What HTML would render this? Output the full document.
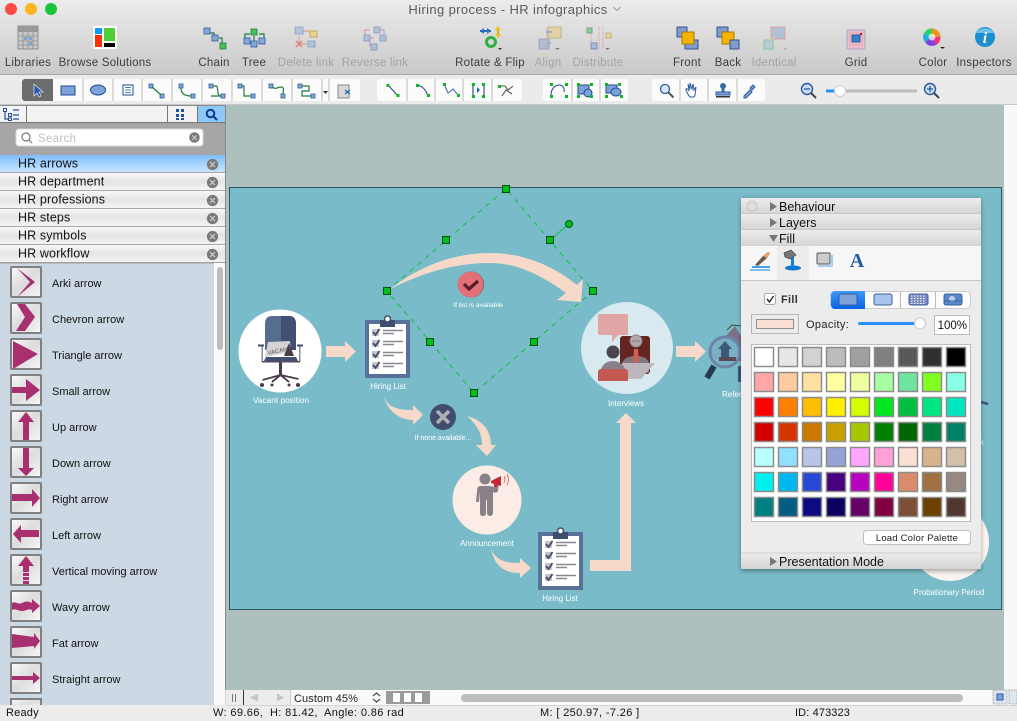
<!DOCTYPE html>
<html><head><meta charset="utf-8"><title>Hiring process - HR infographics</title>
<style>
html,body{margin:0;padding:0;background:#adc0bd}
svg{display:block;position:absolute;left:0;top:0}
text{font-family:"Liberation Sans",sans-serif;white-space:pre}
.tb{font-size:11.5px;letter-spacing:.25px;fill:#3c3c3c;text-anchor:middle}
.dis{fill:#a2a2a2}
.lib{font-size:12.5px;fill:#111;letter-spacing:.12px}
.it{font-size:11px;fill:#111}
.st{font-size:11px;fill:#111;letter-spacing:.12px}
.cv{font-size:8px;fill:#fff;text-anchor:middle}
.ph{font-size:12.5px;fill:#111}
.m{fill:#a83070}
.d{stroke:#bbb;stroke-width:1}
.sw{stroke:#8c8c8c;stroke-width:1.5}
.ln{fill:none;stroke:#1b7d3a;stroke-width:1.2}
.bx{fill:#86a8d8;stroke:#2c5a9c;stroke-width:.8}
.gbx{fill:#48c060;stroke:#1b7d3a;stroke-width:.8}
.h{fill:#00bf1c;stroke:#05500f;stroke-width:1}
</style></head><body>
<svg width="1017" height="721" viewBox="0 0 1017 721" xmlns="http://www.w3.org/2000/svg">
<defs>
<filter id="blur" x="-10%" y="-10%" width="120%" height="120%"><feGaussianBlur stdDeviation="2.500"/></filter>
<linearGradient id="tg" x1="0" y1="0" x2="0" y2="1"><stop offset="0" stop-color="#ececec"/><stop offset="1" stop-color="#c9c9c9"/></linearGradient>
<linearGradient id="hd" x1="0" y1="0" x2="0" y2="1"><stop offset="0" stop-color="#f8f8f8"/><stop offset=".5" stop-color="#e4e4e4"/><stop offset="1" stop-color="#f4f4f4"/></linearGradient>
<linearGradient id="bl" x1="0" y1="0" x2="0" y2="1"><stop offset="0" stop-color="#80bdfb"/><stop offset="1" stop-color="#c6e6fe"/></linearGradient>
<linearGradient id="ph" x1="0" y1="0" x2="0" y2="1"><stop offset="0" stop-color="#ececec"/><stop offset="1" stop-color="#d4d4d4"/></linearGradient>
<linearGradient id="btn" x1="0" y1="0" x2="1" y2="1"><stop offset="0" stop-color="#fafafa"/><stop offset=".5" stop-color="#dcdcdc"/><stop offset="1" stop-color="#f8f8f8"/></linearGradient>
<linearGradient id="seg" x1="0" y1="0" x2="0" y2="1"><stop offset="0" stop-color="#3c98fc"/><stop offset="1" stop-color="#0a62ea"/></linearGradient>
<g id="clip">
<rect x="0" y="0" width="45" height="58" fill="#587199"/>
<rect x="4" y="4" width="37" height="50" fill="#fff"/>
<rect x="15" y="0" width="15" height="7" fill="#3f4d6e"/>
<circle cx="22.500" cy="-1" r="3" fill="#fff" stroke="#3f4d6e" stroke-width="1.500"/>
<g id="cr"><rect x="7" y="9" width="7" height="7" fill="#c8c4cc"/><path d="M8 12l2.500 3 4-6" fill="none" stroke="#3f4d6e" stroke-width="1.800"/><path d="M18 10.500h20M18 13.500h11" stroke="#8b8790" stroke-width="1.500"/></g>
<use href="#cr" y="11"/><use href="#cr" y="22"/><use href="#cr" y="33"/>
</g>
<g id="x"><circle r="7" fill="#7a7a7a"/><path d="M-3-3L3 3M3-3L-3 3" stroke="#ccc" stroke-width="1.500"/></g>
<rect id="ib" width="30" height="30" x="1" y="1" rx="1" fill="url(#btn)" stroke="#808080" stroke-width="2"/>
</defs>

<!-- Backgrounds -->
<rect width="1017" height="721" fill="#adc0bd"/>
<rect width="1017" height="74" fill="url(#tg)"/>
<rect y="74" width="1017" height="1" fill="#a9a9a9"/>
<rect y="75" width="1017" height="30" fill="#ebebeb"/>
<rect y="104" width="1017" height="1" fill="#c8c8c8"/>

<!-- Window controls -->
<circle cx="11" cy="9" r="6" fill="#fc4a48"/><circle cx="31" cy="9" r="6" fill="#fdb61e"/><circle cx="51" cy="9" r="6" fill="#19c53a"/>
<text x="508" y="14" font-size="13" text-anchor="middle" fill="#5a5a5a" letter-spacing=".38">Hiring process - HR infographics</text>
<path d="M613 7l4 3.500 4-3.500" fill="none" stroke="#aaa" stroke-width="1.200"/>

<!-- Toolbar icons -->
<g><rect x="18" y="26" width="20" height="23" fill="#c8c8c8" stroke="#8d8d8d"/><rect x="18" y="26" width="20" height="6" fill="#999"/><path d="M18 36h20M18 41h20M18 45h20M23 32v17M28 32v17M33 32v17" stroke="#8d8d8d" stroke-width=".8"/><rect x="24" y="37" width="3" height="3" fill="#7ba3d8"/><rect x="29" y="37" width="3" height="3" fill="#7ba3d8"/><rect x="29" y="42" width="3" height="3" fill="#7ba3d8"/></g>
<g><rect x="93" y="26" width="24" height="23" rx="2" fill="#fff"/><rect x="95" y="28" width="7" height="6" fill="#0a9cf0"/><rect x="95" y="35" width="7" height="12" fill="#fa3205"/><rect x="104" y="28" width="11" height="13" fill="#50d038"/><rect x="104" y="43" width="11" height="4" fill="#000"/></g>
<!-- chain -->
<g><path class="ln" d="M209 33h5v5M219 38h3v5"/><rect class="bx" x="204" y="28" width="6" height="6"/><rect class="bx" x="212" y="35" width="6" height="6"/><rect class="gbx" x="220" y="43" width="6" height="6"/></g>
<!-- tree -->
<g><path class="ln" d="M254 36v8M250 34h-5v5M259 34h5v5"/><rect class="gbx" x="251" y="29" width="6" height="6"/><rect class="bx" x="244" y="38" width="6" height="6"/><rect class="bx" x="251" y="41" width="6" height="6"/><rect class="bx" x="259" y="38" width="6" height="6"/></g>
<!-- delete -->
<g opacity=".65"><path d="M299 36v8h8M303 31h10" stroke="#e07060" fill="none"/><rect class="bx" x="295" y="27" width="8" height="7" opacity=".7"/><rect x="310" y="31" width="7" height="6" fill="#f0d060" stroke="#b89020"/><rect class="bx" x="308" y="41" width="7" height="6" opacity=".7"/><path d="M296 41l6 6M302 41l-6 6" stroke="#e05040" stroke-width="1.500"/></g>
<!-- reverse -->
<g opacity=".5"><path d="M370 30h-5v6M379 30h5v4M374 38h-4v8" fill="none" stroke="#c04090"/><rect class="bx" x="374" y="27" width="6" height="6"/><rect class="bx" x="364" y="35" width="6" height="6"/><rect class="bx" x="380" y="35" width="6" height="6"/><rect class="bx" x="371" y="44" width="6" height="6"/></g>
<!-- rotate -->
<g><path d="M480 31h11" stroke="#2a70c0" stroke-width="2"/><path d="M484 28l-4 3 4 3zM487 28l4 3-4 3z" fill="#2a70c0"/><path d="M498 28v8" stroke="#e0a800" stroke-width="2"/><path d="M495 30l3-4 3 4zM495 34l3 4 3-4z" fill="#f0c020"/><circle cx="491" cy="42" r="4.500" fill="none" stroke="#30b040" stroke-width="3"/><path d="M498 48l4 0-2 2z" fill="#333"/></g>
<!-- align -->
<g opacity=".55"><rect x="548" y="27" width="13" height="11" fill="#eac878" stroke="#b09040"/><rect x="539" y="39" width="10" height="10" fill="#90a8d0" stroke="#6080b0"/><path d="M547 28v20" stroke="#e07070" stroke-dasharray="1.500 1"/><path d="M552 32h-6M551 43h-4" stroke="#6090d0" stroke-width="2"/><path d="M555 48h5l-2.500 2z" fill="#333"/></g>
<!-- distribute -->
<g opacity=".55"><path d="M591 27v22M599 27v22M603 27v22" stroke="#e07070" stroke-dasharray="1.500 1"/><rect x="587" y="28" width="5" height="5" fill="#48c060" stroke="#1b7d3a"/><rect x="606" y="33" width="5" height="5" fill="#f0d060" stroke="#b89020"/><rect x="591" y="43" width="6" height="6" fill="#86a8d8" stroke="#2c5a9c"/><path d="M605 48h5l-2.500 2z" fill="#333"/></g>
<!-- front -->
<g><rect x="677" y="27" width="10" height="10" fill="#7f9ccc" stroke="#35558c"/><rect x="685" y="40" width="13" height="9" fill="#7f9ccc" stroke="#35558c"/><rect x="682" y="32" width="12" height="12" fill="#f4b400" stroke="#a87800"/></g>
<!-- back -->
<g><rect x="717" y="27" width="11" height="10" fill="#7f9ccc" stroke="#35558c"/><rect x="722" y="32" width="12" height="12" fill="#f4b400" stroke="#a87800"/><rect x="730" y="40" width="9" height="9" fill="#7f9ccc" stroke="#35558c"/></g>
<!-- identical -->
<g opacity=".55"><rect x="771" y="27" width="14" height="12" fill="#90a8d0" stroke="#d08060"/><rect x="764" y="40" width="9" height="9" fill="#a8c0d8" stroke="#48c060"/><path d="M770 40l5-3M783 48h5l-2.500 2z" stroke="#f0c0a0"/></g>
<!-- grid -->
<g><rect x="847" y="30" width="18" height="19" fill="#eec4d0" stroke="#a6a6c6"/><path d="M850 30v19M853 30v19M856 30v19M859 30v19M862 30v19M847 33h18M847 36h18M847 39h18M847 42h18M847 45h18" stroke="#dd9aac" stroke-width=".6"/><rect x="852" y="35" width="8" height="7" fill="#3a80c8" stroke="#2c5a9c"/><rect x="860" y="33" width="2" height="2" fill="#d00020"/></g>
<!-- color -->
<g><circle cx="932" cy="37" r="8.500" fill="#f0e040"/><path d="M932 37V28.500A8.500 8.500 0 0 1 940.500 37z" fill="#f09020"/><path d="M932 37L940.500 37A8.500 8.500 0 0 1 936 45z" fill="#f03080"/><path d="M932 37l4 8A8.500 8.500 0 0 1 925 42z" fill="#8040e0"/><path d="M932 37l-7 5A8.500 8.500 0 0 1 924 33z" fill="#20b0e0"/><path d="M932 37l-8-4A8.500 8.500 0 0 1 932 28.500z" fill="#30d060"/><circle cx="932" cy="37" r="3.500" fill="#fff" opacity=".7"/><path d="M940 47h5l-2.500 2z" fill="#222"/></g>
<!-- inspectors -->
<g><circle cx="985" cy="37" r="10" fill="#1d8fd0"/><path d="M976 33a9.500 7 0 0 1 18 0z" fill="#70c0ec"/><text x="985" y="43" font-size="16" font-weight="bold" font-style="italic" fill="#fff" text-anchor="middle" style="font-family:'Liberation Serif',serif">i</text></g>

<text class="tb" x="28" y="66">Libraries</text>
<text class="tb" x="105" y="66">Browse Solutions</text>
<text class="tb" x="214" y="66">Chain</text>
<text class="tb" x="254" y="66">Tree</text>
<text class="tb dis" x="306" y="66">Delete link</text>
<text class="tb dis" x="375" y="66">Reverse link</text>
<text class="tb" x="490" y="66">Rotate &amp; Flip</text>
<text class="tb dis" x="548" y="66">Align</text>
<text class="tb dis" x="598" y="66">Distribute</text>
<text class="tb" x="687" y="66">Front</text>
<text class="tb" x="728" y="66">Back</text>
<text class="tb dis" x="774" y="66">Identical</text>
<text class="tb" x="856" y="66">Grid</text>
<text class="tb" x="933" y="66">Color</text>
<text class="tb" x="984" y="66">Inspectors</text>

<!-- Second toolbar -->
<rect x="22" y="79" width="338" height="22" rx="3" fill="#fbfbfb"/>
<path d="M22 82a3 3 0 0 1 3-3h28v22H25a3 3 0 0 1-3-3z" fill="#6c6c6c"/>
<path class="d" d="M83 79v22M113 79v22M142 79v22M172 79v22M202 79v22M232 79v22M262 79v22M292 79v22M322 79v22M329 79v22"/>
<rect x="377" y="79" width="145" height="22" rx="3" fill="#fbfbfb"/>
<path class="d" d="M407 79v22M435 79v22M463 79v22M492 79v22"/>
<rect x="543" y="79" width="85" height="22" rx="3" fill="#fbfbfb"/>
<path class="d" d="M572 79v22M600 79v22"/>
<rect x="652" y="79" width="113" height="22" rx="3" fill="#fbfbfb"/>
<path class="d" d="M680 79v22M708 79v22M737 79v22"/>

<path d="M34 84v12l3-3 2 4 2-1-2-4h4z" fill="#2a55b0" stroke="#fff" stroke-width=".6"/>
<rect x="61" y="86" width="14" height="9" fill="#7ba3d8" stroke="#204a90"/>
<ellipse cx="98" cy="90" rx="7.500" ry="5" fill="#7ba3d8" stroke="#204a90"/>
<rect x="123" y="85" width="10" height="10" fill="#fff" stroke="#204a90"/><path d="M125 87.500h6M125 90h6M125 92.500h6" stroke="#204a90" stroke-width=".8"/>
<g><rect class="bx" x="149" y="84" width="4" height="4"/><rect class="bx" x="160" y="94" width="4" height="4"/><path class="ln" d="M152 87l9 8"/></g>
<g><rect class="bx" x="179" y="84" width="4" height="4"/><rect class="bx" x="191" y="94" width="4" height="4"/><path class="ln" d="M181 88c0 6 4 8 10 8"/></g>
<g><rect class="bx" x="209" y="84" width="4" height="4"/><rect class="bx" x="221" y="94" width="4" height="4"/><path class="ln" d="M213 86h3c3 0 0 10 5 10M211 96h10"/></g>
<g><rect class="bx" x="238" y="84" width="4" height="4"/><rect class="bx" x="251" y="94" width="4" height="4"/><path class="ln" d="M242 86h2v10h7"/></g>
<g><rect class="bx" x="269" y="84" width="4" height="4"/><rect class="bx" x="281" y="94" width="4" height="4"/><path class="ln" d="M272 87c4 3 5 0 9 0s2 5 2 7"/></g>
<g><rect class="bx" x="298" y="84" width="4" height="4"/><rect class="bx" x="311" y="94" width="4" height="4"/><path class="ln" d="M302 86h7v5h-7v5h9"/></g>
<path d="M323 91h5l-2.500 3z" fill="#333"/>
<g><rect x="338" y="85" width="11" height="13" fill="#d8d8d8" stroke="#888"/><path d="M345 90l5 4M350 90l-5 4" stroke="#2060c0" stroke-width="1.200"/></g>
<g stroke="#1b7d3a" fill="none" stroke-width="1.100"><path d="M388 85l10 11" stroke="#204a90"/><path d="M417 85c6 1 9 5 11 11" stroke="#204a90"/><path d="M444 84l4 9 5-4 5 6" stroke="#4a70a0"/><path d="M473 84v12M484 84v12" stroke="#204a90"/><path d="M499 86h6l3 4 5-4M502 96l4-6 6 4" stroke="#555"/></g>
<g fill="#0cb81e"><rect x="386.500" y="84" width="3" height="3"/><rect x="396.500" y="94" width="3" height="3"/><rect x="416" y="84" width="3" height="3"/><rect x="427" y="94" width="3" height="3"/><rect x="443" y="83" width="3" height="3"/><rect x="457" y="94" width="3" height="3"/><rect x="472" y="83" width="3" height="3"/><rect x="472" y="95" width="3" height="3"/><rect x="482" y="83" width="3" height="3"/><rect x="482" y="95" width="3" height="3"/><rect x="498" y="85" width="3" height="3"/></g>
<path d="M477 87v6l3-3z" fill="#2060c0"/>
<g fill="none" stroke="#204a90"><path d="M551 95c0-6 4-10 8-10s6 4 5 7"/><rect x="578" y="85" width="11" height="9" fill="#7ba3d8"/><circle cx="588" cy="93" r="4" fill="#7ba3d8"/><rect x="606" y="85" width="11" height="8" fill="#7ba3d8"/><ellipse cx="616" cy="92" rx="5" ry="4" fill="#7ba3d8"/></g>
<g fill="#0cb81e"><rect x="550" y="83" width="3" height="3"/><rect x="565" y="83" width="3" height="3"/><rect x="550" y="95" width="3" height="3"/><rect x="565" y="95" width="3" height="3"/><rect x="577" y="83" width="3" height="3"/><rect x="590" y="83" width="3" height="3"/><rect x="577" y="95" width="3" height="3"/><rect x="590" y="95" width="3" height="3"/><rect x="605" y="83" width="3" height="3"/><rect x="618" y="83" width="3" height="3"/><rect x="605" y="95" width="3" height="3"/><rect x="620" y="95" width="3" height="3"/></g>
<g fill="none" stroke="#2c5a9c" stroke-width="1.300"><circle cx="665" cy="89" r="4.500" fill="#d8e8f8"/><path d="M668.500 92.500l5 5" stroke="#555" stroke-width="2"/><path d="M690 97c-3-3-4-7-4-8s2 0 3 2l-1-7 2 5 0-6 2 6 1-5 1 6 2-3-1 8c0 1-1 2-2 2z" stroke-width="1"/></g>
<g fill="#3a6aa8"><circle cx="723" cy="86" r="3"/><rect x="721.500" y="88" width="3" height="4"/><rect x="716" y="92" width="14" height="3" fill="#7ba3d8" stroke="#2c5a9c"/><rect x="716" y="96" width="14" height="1.500" fill="#333"/></g>
<path d="M744 96l6-6 2 2-6 6h-2zM750 88l3-3 2 2-3 3z" fill="#7ba3d8" stroke="#2c5a9c"/>
<g fill="#c8dcf4" stroke="#2c5a9c" stroke-width="1.400"><circle cx="807" cy="89" r="5.500"/><circle cx="930" cy="89" r="5.500"/></g>
<path d="M804 89h6M927 89h6M930 86v6" stroke="#2c5a9c" stroke-width="1.300"/>
<path d="M811 93l5 5M934 93l5 5" stroke="#444" stroke-width="2"/>
<rect x="826" y="89.500" width="91" height="3" rx="1.500" fill="#bbb"/><rect x="826" y="89.500" width="12" height="3" fill="#2a8ff8"/>
<circle cx="840" cy="91" r="5.500" fill="#fff" stroke="#ccc"/>

<!-- Sidebar -->
<rect x="0" y="105" width="226" height="600" fill="#ccd9e4"/>
<rect x="0" y="105" width="226" height="1" fill="#8a8a8a"/>
<rect x="0" y="106" width="226" height="16" fill="#f3f3f3"/>
<rect x="198" y="106" width="27" height="16" fill="#8cc8fa"/>
<path d="M26.500 106v16M167.500 106v16M197.500 106v16" stroke="#777"/>
<g fill="none" stroke="#2050a0"><rect x="3.500" y="108.500" width="3" height="3"/><rect x="8.500" y="113.500" width="3" height="3"/><rect x="8.500" y="118" width="3" height="2.500"/><path d="M5 112v7h3M13 110h6M13 115h6M13 119h6" stroke-width="1.200"/></g>
<g fill="#2050a0"><rect x="176" y="109" width="3" height="3"/><rect x="181" y="109" width="3" height="3"/><rect x="176" y="114" width="3" height="3"/><rect x="181" y="114" width="3" height="3"/><rect x="176" y="118" width="3" height="2"/><rect x="181" y="118" width="3" height="2"/></g>
<circle cx="210.500" cy="113.500" r="3.800" fill="none" stroke="#123a90" stroke-width="2"/><path d="M213.500 116.500l3.500 3.500" stroke="#123a90" stroke-width="2.200"/>
<rect x="0" y="122" width="226" height="33" fill="#a6a6a6"/>
<rect x="0" y="122" width="226" height="1" fill="#777"/>
<rect x="16" y="129" width="187" height="17" rx="3" fill="#fff" stroke="#d8d8d8"/>
<circle cx="26" cy="137" r="4" fill="none" stroke="#777" stroke-width="1.200"/><path d="M29 140l3 3" stroke="#777" stroke-width="1.200"/>
<text x="38" y="142" font-size="11.500" fill="#c0c0c0" letter-spacing=".3">Search</text>
<use href="#x" transform="translate(194.500 137.500) scale(.75)"/>

<rect y="155" width="226" height="17" fill="url(#bl)"/><rect y="172" width="226" height="1" fill="#a8a8a8"/>
<rect y="173" width="226" height="17" fill="url(#hd)"/><rect y="190" width="226" height="1" fill="#a8a8a8"/>
<rect y="191" width="226" height="17" fill="url(#hd)"/><rect y="208" width="226" height="1" fill="#a8a8a8"/>
<rect y="209" width="226" height="17" fill="url(#hd)"/><rect y="226" width="226" height="1" fill="#a8a8a8"/>
<rect y="227" width="226" height="17" fill="url(#hd)"/><rect y="244" width="226" height="1" fill="#a8a8a8"/>
<rect y="245" width="226" height="17" fill="url(#hd)"/><rect y="262" width="226" height="1.500" fill="#a0a0a0"/>
<text class="lib" x="18" y="167.500">HR arrows</text>
<text class="lib" x="18" y="185.500">HR department</text>
<text class="lib" x="18" y="203.500">HR professions</text>
<text class="lib" x="18" y="221.500">HR steps</text>
<text class="lib" x="18" y="239.500">HR symbols</text>
<text class="lib" x="18" y="257.500">HR workflow</text>
<use href="#x" transform="translate(212.500 164.500) scale(.8)"/>
<use href="#x" transform="translate(212.500 182.500) scale(.8)"/>
<use href="#x" transform="translate(212.500 200.500) scale(.8)"/>
<use href="#x" transform="translate(212.500 218.500) scale(.8)"/>
<use href="#x" transform="translate(212.500 236.500) scale(.8)"/>
<use href="#x" transform="translate(212.500 254.500) scale(.8)"/>

<rect x="214" y="263" width="11" height="442" fill="#fafafa"/>
<rect x="217" y="267" width="6" height="83" rx="3" fill="#bdbdbd"/>
<rect x="225" y="105" width="1" height="585" fill="#888"/>

<g transform="translate(10 266)"><use href="#ib"/><path class="m" d="M7 2L25 16 7 31 20 16z"/></g>
<g transform="translate(10 302)"><use href="#ib"/><path class="m" d="M7 2h8l10 13-10 14H6l9-14z"/></g>
<g transform="translate(10 338)"><use href="#ib"/><path class="m" d="M3 3L28 16 3 31z"/></g>
<g transform="translate(10 374)"><use href="#ib"/><path class="m" d="M2 13h14V5l14 11-14 11v-8H2z"/></g>
<g transform="translate(10 410)"><use href="#ib"/><path class="m" d="M16 2l8 10h-5v18h-6V12H8z"/></g>
<g transform="translate(10 446)"><use href="#ib"/><path class="m" d="M13 2h6v20h5l-8 8-8-8h5z"/></g>
<g transform="translate(10 482)"><use href="#ib"/><path class="m" d="M2 12h20V7l8 9-8 9v-6H2z"/></g>
<g transform="translate(10 518)"><use href="#ib"/><path class="m" d="M29 12H11V7l-8 9 8 9v-6h18z"/></g>
<g transform="translate(10 554)"><use href="#ib"/><path class="m" d="M16 2l8 10h-5v6h-6v-6H8zM13 19h6v3h-6zM13 23h6v3h-6zM13 27h6v3h-6z"/></g>
<g transform="translate(10 590)"><use href="#ib"/><path class="m" d="M2 13c4-2 6 2 10 0s6-2 10 0V9l8 7-8 7v-3c-4-2-6 1-10 1s-6-3-10-1z"/></g>
<g transform="translate(10 626)"><use href="#ib"/><path class="m" d="M2 8l22 3V7l6 8-6 8v-3L2 22z"/></g>
<g transform="translate(10 662)"><use href="#ib"/><path class="m" d="M2 14h21v-4l7 6-7 6v-4H2z"/></g>
<g transform="translate(10 698)"><rect x="1" y="1" width="30" height="10" fill="url(#btn)" stroke="#808080" stroke-width="2"/></g>

<text class="it" x="52" y="287">Arki arrow</text>
<text class="it" x="52" y="323">Chevron arrow</text>
<text class="it" x="52" y="359">Triangle arrow</text>
<text class="it" x="52" y="395">Small arrow</text>
<text class="it" x="52" y="431">Up arrow</text>
<text class="it" x="52" y="467">Down arrow</text>
<text class="it" x="52" y="503">Right arrow</text>
<text class="it" x="52" y="539">Left arrow</text>
<text class="it" x="52" y="575">Vertical moving arrow</text>
<text class="it" x="52" y="611">Wavy arrow</text>
<text class="it" x="52" y="647">Fat arrow</text>
<text class="it" x="52" y="683">Straight arrow</text>

<!-- Canvas page -->
<rect x="229.500" y="187.500" width="772" height="422" fill="#7abbca" stroke="#2e5763"/>

<!-- Vacant -->
<circle cx="280" cy="351" r="41.500" fill="#fff"/>
<path d="M265 350v-26q0-8 7-8h17q7 0 7 8v26z" fill="#566d91"/>
<path d="M281 316h8q7 0 7 8v26h-15z" fill="#3f5072"/>
<path d="M266 357h30l2 4h-34z" fill="#3f5072"/>
<rect x="261.500" y="346" width="1.500" height="16" fill="#8a8a98"/><rect x="299" y="346" width="1.500" height="16" fill="#8a8a98"/>
<rect x="258" y="344.500" width="6" height="2" fill="#3f5072"/><rect x="297" y="344.500" width="6" height="2" fill="#3f5072"/>
<rect x="262" y="361" width="38" height="1.500" fill="#5a4a58"/>
<rect x="279" y="362" width="3" height="13" fill="#4a3c4a"/>
<path d="M280.500 375l-18 5M280.500 375l-8.500 7M280.500 375l8.500 7M280.500 375l18 4" stroke="#4a3c4a" stroke-width="1.800"/>
<circle cx="262" cy="385" r="2" fill="#4a3c4a"/><circle cx="272" cy="385" r="1.500" fill="#4a3c4a"/><circle cx="289" cy="385" r="1.500" fill="#4a3c4a"/><circle cx="298" cy="385" r="2" fill="#4a3c4a"/>
<path d="M268 342l22-1 1 11-26 5z" fill="#d6d2d2"/>
<path d="M289 343l5 13h-10z" fill="#4a3c4a"/>
<text x="0" y="0" transform="translate(268 355) rotate(-12)" font-size="6" fill="#555">VACANT</text>
<text class="cv" x="281" y="403" style="font-size:8.300px">Vacant position</text>

<path d="M326 346h19v-5l11 10.500-11 10.500v-5h-19z" fill="#f6d9c9"/>
<use href="#clip" x="365" y="320"/>
<text class="cv" x="388" y="389">Hiring List</text>

<!-- Big curved arrow + selection -->
<path d="M390 289C425 262 460 253 490 253C525 253 555 267 577 285L583 279L581 302L557 300L566 293C545 278 520 263 490 263C455 263 425 272 390 289z" fill="#f6d9c9"/>
<circle cx="471" cy="284.500" r="13" fill="#4a4a5a"/>
<circle cx="470.500" cy="284.500" r="13" fill="#e27078"/>
<path d="M464 284l5 5 9-8" fill="none" stroke="#5a1c2a" stroke-width="3.200"/>
<text class="cv" x="478" y="307" style="font-size:6.800px">If list is available</text>
<path d="M387 291L506 189L593 291L474 393z" fill="none" stroke="#10c040" stroke-width="1" stroke-dasharray="5 5"/>
<path d="M550 240L569 224" stroke="#10c040" stroke-width="1"/>
<circle class="h" cx="569" cy="224" r="3.500"/>
<rect class="h" x="502.500" y="185.500" width="7" height="7"/>
<rect class="h" x="383.500" y="287.500" width="7" height="7"/>
<rect class="h" x="589.500" y="287.500" width="7" height="7"/>
<rect class="h" x="470.500" y="389.500" width="7" height="7"/>
<rect class="h" x="442.500" y="236.500" width="7" height="7"/>
<rect class="h" x="546.500" y="236.500" width="7" height="7"/>
<rect class="h" x="426.500" y="338.500" width="7" height="7"/>
<rect class="h" x="530.500" y="338.500" width="7" height="7"/>

<!-- If none -->
<path d="M383 395C388 408 398 410 413 410V405L423 415 413 425V420C400 420 388 412 383 395z" fill="#f6d9c9"/>
<circle cx="443" cy="417" r="13" fill="#3f4d6e"/>
<path d="M437 411l12 12M449 411l-12 12" stroke="#b4aeb6" stroke-width="3.500"/>
<text class="cv" x="443" y="440" style="font-size:7px">If none available...</text>
<path d="M467 416C482 420 491 430 491 445H496L487 456 476 445H482C482 432 476 424 467 416z" fill="#f6d9c9"/>

<!-- Announcement -->
<circle cx="487" cy="500" r="34.500" fill="#fbece5"/>
<circle cx="485" cy="479" r="5.500" fill="#8a8088"/>
<path d="M480 486h8c4 0 5 1 7 1l1-5 3 1-1 8c-1 2-3 2-5 1v21c0 2-2 3-3 3s-3-1-3-3v-13h-1v13c0 2-1 3-3 3s-3-1-3-3v-22l-1 11h-3l1-10c0-4 1-6 3-6z" fill="#8a8088"/>
<path d="M491 481l10-5v10l-10-3z" fill="#c42838"/><rect x="494" y="484" width="3" height="3" fill="#c42838"/>
<path d="M504 476q2 3 0 7M507 474q3 5 0 11" fill="none" stroke="#e05060" stroke-width=".8"/>
<text class="cv" x="487" y="546">Announcement</text>
<path d="M491 549C497 562 508 563 520 563V558L531 568 520 578V573C505 573 495 567 491 549z" fill="#f6d9c9"/>
<use href="#clip" x="538" y="532"/>
<text class="cv" x="560" y="601">Hiring List</text>
<path d="M590 560H620V423H616L626 413 636 423H631V571H590z" fill="#f6d9c9"/>

<!-- Interviews -->
<circle cx="627" cy="348" r="46" fill="#d8eaef"/>
<path d="M600 314h26q2 0 2 2v17q0 2-2 2h-8l-6 7v-7h-12q-2 0-2-2v-17q0-2 2-2z" fill="#e0a5a5"/>
<rect x="620" y="336" width="30" height="38" rx="3" fill="#65241f"/>
<path d="M622 363q3-7 14-7q11 0 13 7v10h-27z" fill="#7e7880"/>
<circle cx="636" cy="341" r="6" fill="#b0a8ac" stroke="#8a8088"/><path d="M632 341h8" stroke="#777" stroke-width="1"/>
<path d="M634 349h4l1 12-3 3-3-3z" fill="#d06050"/>
<path d="M622 363h33l-14 16h-19z" fill="#bdb6bc"/>
<circle cx="613" cy="352" r="6.500" fill="#4e4450"/>
<path d="M600 373q2-12 13-12q10 0 14 12z" fill="#8a8088"/>
<path d="M598 372q0-3 3-3h24q3 0 3 3v9h-30z" fill="#c25a52"/>
<text class="cv" x="626" y="406">Interviews</text>
<path d="M676 346h19v-5l11 10.500-11 10.500v-5h-19z" fill="#f6d9c9"/>

<!-- Referral -->
<path d="M726 336l9-10 6 10v25h-12z" fill="#7d7186"/>
<path d="M727 330l5-5 9 1" fill="none" stroke="#444"/>
<circle cx="725" cy="352" r="15" fill="#7ab0c4" stroke="#6d84a8" stroke-width="3"/>
<path d="M725 341l7 8h-3v8h-8v-8h-3z" fill="#3f5878"/><rect x="719" y="357" width="17" height="4" fill="#5a4a58"/>
<path d="M714 366l-7 12" stroke="#26394f" stroke-width="6"/>
<rect x="738" y="366" width="3" height="16" fill="#3f5878"/>
<text class="cv" x="722" y="397" style="text-anchor:start">Referral</text>

<!-- Hidden right elements -->
<path d="M981 402l7 2" stroke="#3f5878" stroke-width="2.500"/>
<text x="980" y="445" font-size="8" fill="#d8e8ee">k</text>
<circle cx="950" cy="542" r="39" fill="#fbf3ef"/>
<text class="cv" x="949" y="595">Probationary Period</text>

<!-- Inspector panel -->
<rect x="741" y="199" width="240" height="372" fill="#000" opacity=".35" filter="url(#blur)"/>
<rect x="741" y="198" width="240" height="371" fill="#ececec"/>
<rect x="741" y="198" width="240" height="16" fill="url(#ph)"/><rect x="741" y="213.500" width="240" height=".8" fill="#b8b8b8"/>
<rect x="741" y="214" width="240" height="16" fill="url(#ph)"/><rect x="741" y="229.500" width="240" height=".8" fill="#b8b8b8"/>
<rect x="741" y="230" width="240" height="16" fill="url(#ph)"/>
<rect x="741" y="246" width="240" height="34" fill="#f6f6f6"/>
<rect x="777" y="246" width="32" height="34" fill="#ececec"/>
<rect x="741" y="280" width="240" height="1" fill="#c6c6c6"/>
<circle cx="752" cy="206" r="5" fill="#dedede" stroke="#c8c8c8"/>
<path d="M770 202v9l7-4.500z" fill="#777"/><path d="M770 218v9l7-4.500z" fill="#777"/><path d="M769 235h9l-4.500 7z" fill="#777"/>
<text class="ph" x="779" y="211">Behaviour</text>
<text class="ph" x="779" y="227">Layers</text>
<text class="ph" x="779" y="243">Fill</text>
<path d="M752 267h18" stroke="#0a84e0" stroke-width="1.500"/><path d="M750 270h20" stroke="#0a84e0" stroke-width="1"/>
<path d="M755 265l8-9 5-4 2 1-3 5-9 8z" fill="#6a5a50"/><path d="M763 256l5-4 2 1-3 5z" fill="#e8a070"/>
<g><ellipse cx="793" cy="268" rx="8" ry="2.500" fill="#0a78d0"/><path d="M791 257h3v10h-3z" fill="#0a84e0"/><path d="M784 253l7-3 5 5-6 4-5-2z" fill="#777" stroke="#444" stroke-width=".7"/></g>
<rect x="817" y="253" width="13" height="11" rx="1" fill="#ccc" stroke="#555"/><path d="M818 266h14v-11" fill="none" stroke="#8cc0f0" stroke-width="1.500"/>
<text x="857" y="267" font-size="20" font-weight="bold" fill="#1a5ca8" text-anchor="middle" style="font-family:'Liberation Serif',serif">A</text>

<rect x="764.500" y="293.500" width="11" height="11" rx="2" fill="#fff" stroke="#aaa"/>
<path d="M767 299l2.500 3 4-6" fill="none" stroke="#222" stroke-width="1.400"/>
<text x="781" y="303" font-size="11" font-weight="bold" fill="#333" letter-spacing=".3">Fill</text>
<rect x="830.500" y="291.500" width="140" height="17" rx="4" fill="#fdfdfd" stroke="#ccc"/>
<path d="M835 291h30v18h-30a4 4 0 0 1-4-4v-10a4 4 0 0 1 4-4z" fill="url(#seg)"/>
<path class="d" d="M900.500 292v16M935.500 292v16"/>
<rect x="839" y="294" width="18" height="11" rx="2" fill="#7ba3d8" stroke="#3a5f9a"/>
<rect x="874" y="294" width="18" height="11" rx="2" fill="#a9c4ea" stroke="#3a5f9a"/>
<rect x="909" y="294" width="19" height="11" rx="2" fill="#7a8ac0" stroke="#3a5f9a"/>
<path d="M911 296h15M911 298.500h15M911 301h15M911 303.500h15" stroke="#fff" stroke-dasharray="1.500 1.500"/>
<rect x="944" y="294" width="18" height="11" rx="2" fill="#5a88c8" stroke="#3a5f9a"/>
<circle cx="952" cy="299" r="3" fill="#c0d4ec"/><path d="M944 300h18v2h-18z" fill="#3a6aa8" opacity=".6"/>

<rect x="751.500" y="314.500" width="47" height="19" fill="#ececec" stroke="#b8b8b8"/>
<rect x="756.500" y="319.500" width="37" height="9" fill="#fae0d4" stroke="#909090"/>
<text x="806" y="328" font-size="11" fill="#222" letter-spacing=".35">Opacity:</text>
<rect x="858" y="322" width="60" height="3" rx="1.500" fill="#2a8ff8"/>
<circle cx="920" cy="323.500" r="5.500" fill="#fff" stroke="#ccc"/>
<rect x="934.500" y="315.500" width="35" height="19" fill="#fff" stroke="#bbb"/>
<text x="967" y="329" font-size="11.500" fill="#111" text-anchor="end">100%</text>

<rect x="751.500" y="344.500" width="219" height="177" fill="#fff" stroke="#bbb"/>
<g class="sw">
<rect class="sw" x="754.500" y="347.500" width="19" height="19" fill="#ffffff"/><rect class="sw" x="778.500" y="347.500" width="19" height="19" fill="#e6e6e6"/><rect class="sw" x="802.500" y="347.500" width="19" height="19" fill="#d2d2d2"/><rect class="sw" x="826.500" y="347.500" width="19" height="19" fill="#bcbcbc"/><rect class="sw" x="850.500" y="347.500" width="19" height="19" fill="#a0a0a0"/><rect class="sw" x="874.500" y="347.500" width="19" height="19" fill="#808080"/><rect class="sw" x="898.500" y="347.500" width="19" height="19" fill="#585858"/><rect class="sw" x="922.500" y="347.500" width="19" height="19" fill="#303030"/><rect class="sw" x="946.500" y="347.500" width="19" height="19" fill="#000000"/>
<rect class="sw" x="754.500" y="372.500" width="19" height="19" fill="#ffa6a6"/><rect class="sw" x="778.500" y="372.500" width="19" height="19" fill="#ffcca0"/><rect class="sw" x="802.500" y="372.500" width="19" height="19" fill="#ffe0a0"/><rect class="sw" x="826.500" y="372.500" width="19" height="19" fill="#ffffa0"/><rect class="sw" x="850.500" y="372.500" width="19" height="19" fill="#eeffa0"/><rect class="sw" x="874.500" y="372.500" width="19" height="19" fill="#a6ffa0"/><rect class="sw" x="898.500" y="372.500" width="19" height="19" fill="#6ee6a0"/><rect class="sw" x="922.500" y="372.500" width="19" height="19" fill="#80ff20"/><rect class="sw" x="946.500" y="372.500" width="19" height="19" fill="#8affe8"/>
<rect class="sw" x="754.500" y="397.500" width="19" height="19" fill="#ff0000"/><rect class="sw" x="778.500" y="397.500" width="19" height="19" fill="#ff8000"/><rect class="sw" x="802.500" y="397.500" width="19" height="19" fill="#ffbf00"/><rect class="sw" x="826.500" y="397.500" width="19" height="19" fill="#fff000"/><rect class="sw" x="850.500" y="397.500" width="19" height="19" fill="#d4ff00"/><rect class="sw" x="874.500" y="397.500" width="19" height="19" fill="#00e620"/><rect class="sw" x="898.500" y="397.500" width="19" height="19" fill="#00bf40"/><rect class="sw" x="922.500" y="397.500" width="19" height="19" fill="#00e680"/><rect class="sw" x="946.500" y="397.500" width="19" height="19" fill="#00e6bf"/>
<rect class="sw" x="754.500" y="422.500" width="19" height="19" fill="#d40000"/><rect class="sw" x="778.500" y="422.500" width="19" height="19" fill="#d43500"/><rect class="sw" x="802.500" y="422.500" width="19" height="19" fill="#cc7a00"/><rect class="sw" x="826.500" y="422.500" width="19" height="19" fill="#c8a000"/><rect class="sw" x="850.500" y="422.500" width="19" height="19" fill="#a6c800"/><rect class="sw" x="874.500" y="422.500" width="19" height="19" fill="#008000"/><rect class="sw" x="898.500" y="422.500" width="19" height="19" fill="#006600"/><rect class="sw" x="922.500" y="422.500" width="19" height="19" fill="#008040"/><rect class="sw" x="946.500" y="422.500" width="19" height="19" fill="#008066"/>
<rect class="sw" x="754.500" y="447.500" width="19" height="19" fill="#b8ffff"/><rect class="sw" x="778.500" y="447.500" width="19" height="19" fill="#90e0ff"/><rect class="sw" x="802.500" y="447.500" width="19" height="19" fill="#b8c4e8"/><rect class="sw" x="826.500" y="447.500" width="19" height="19" fill="#94a4d8"/><rect class="sw" x="850.500" y="447.500" width="19" height="19" fill="#ffa6ff"/><rect class="sw" x="874.500" y="447.500" width="19" height="19" fill="#ffa0d8"/><rect class="sw" x="898.500" y="447.500" width="19" height="19" fill="#fae0d4"/><rect class="sw" x="922.500" y="447.500" width="19" height="19" fill="#d9b38c"/><rect class="sw" x="946.500" y="447.500" width="19" height="19" fill="#d4c0a8"/>
<rect class="sw" x="754.500" y="472.500" width="19" height="19" fill="#00f0f0"/><rect class="sw" x="778.500" y="472.500" width="19" height="19" fill="#00b8f0"/><rect class="sw" x="802.500" y="472.500" width="19" height="19" fill="#2a48d8"/><rect class="sw" x="826.500" y="472.500" width="19" height="19" fill="#480080"/><rect class="sw" x="850.500" y="472.500" width="19" height="19" fill="#b800c0"/><rect class="sw" x="874.500" y="472.500" width="19" height="19" fill="#ff0098"/><rect class="sw" x="898.500" y="472.500" width="19" height="19" fill="#d88c6c"/><rect class="sw" x="922.500" y="472.500" width="19" height="19" fill="#a07040"/><rect class="sw" x="946.500" y="472.500" width="19" height="19" fill="#988880"/>
<rect class="sw" x="754.500" y="497.500" width="19" height="19" fill="#008080"/><rect class="sw" x="778.500" y="497.500" width="19" height="19" fill="#005c80"/><rect class="sw" x="802.500" y="497.500" width="19" height="19" fill="#0c0c80"/><rect class="sw" x="826.500" y="497.500" width="19" height="19" fill="#0c0060"/><rect class="sw" x="850.500" y="497.500" width="19" height="19" fill="#660066"/><rect class="sw" x="874.500" y="497.500" width="19" height="19" fill="#800040"/><rect class="sw" x="898.500" y="497.500" width="19" height="19" fill="#7c5038"/><rect class="sw" x="922.500" y="497.500" width="19" height="19" fill="#6c4000"/><rect class="sw" x="946.500" y="497.500" width="19" height="19" fill="#503830"/>
</g>
<rect x="863.500" y="530.500" width="107" height="14" rx="3" fill="#fff" stroke="#c0c0c0"/>
<text x="917" y="541" font-size="9.500" fill="#222" text-anchor="middle" letter-spacing=".2">Load Color Palette</text>
<rect x="741" y="552.500" width="240" height="1" fill="#cfcfcf"/>
<rect x="741" y="553.500" width="240" height="15.500" fill="url(#ph)"/>
<path d="M770 557v9l7-4.500z" fill="#777"/>
<text class="ph" x="779" y="566">Presentation Mode</text>

<!-- Right scrollbar strip -->
<rect x="1004" y="105" width="13" height="585" fill="#f8f8f8"/>

<!-- Bottom scroll bar -->
<rect x="226" y="690" width="791" height="15" fill="#fafafa"/>
<rect x="226" y="690" width="17" height="15" fill="#ececec"/>
<path d="M232.500 694v8M235.500 694v8" stroke="#777"/>
<path d="M243.500 690v15" stroke="#333"/>
<rect x="244" y="690" width="46" height="15" fill="#ececec"/>
<path d="M250 697.500l8-4v8zM277 693.500l7 4-7 4z" fill="#c4c4c4"/>
<path d="M290.500 690v15" stroke="#ccc"/>
<text x="294" y="702" font-size="11" fill="#222" letter-spacing=".1">Custom 45%</text>
<path d="M373 696l3.500-3 3.500 3M373 699l3.500 3 3.500-3" fill="none" stroke="#333" stroke-width="1.100"/>
<rect x="386" y="691" width="44" height="13" fill="#9a9a9a"/>
<rect x="393" y="693" width="7" height="9" fill="#fff"/><rect x="404" y="693" width="7" height="9" fill="#fff"/><rect x="415" y="693" width="7" height="9" fill="#fff"/>
<rect x="461" y="694" width="502" height="8" rx="4" fill="#bdbdbd"/>
<rect x="993" y="690" width="14" height="14" fill="#dce4ee" stroke="#aaa" stroke-dasharray="1.500 1"/>
<rect x="997" y="694" width="6" height="6" fill="#7ba3d8" stroke="#2c5a9c"/>
<rect x="1009" y="690" width="8" height="14" fill="#dce4ee" stroke="#aaa" stroke-dasharray="1.500 1"/>

<!-- Status bar -->
<rect y="705" width="1017" height="16" fill="#ececec"/>
<rect x="226" y="705" width="791" height="1" fill="#d4d4d4"/>
<text class="st" x="6" y="716" style="letter-spacing:.2px">Ready</text>
<text class="st" x="213" y="716" style="letter-spacing:.36px">W: 69.66,  H: 81.42,  Angle: 0.86 rad</text>
<text class="st" x="540" y="716" style="letter-spacing:.36px">M: [ 250.97, -7.26 ]</text>
<text class="st" x="795" y="716">ID: 473323</text>
</svg>
</body></html>
